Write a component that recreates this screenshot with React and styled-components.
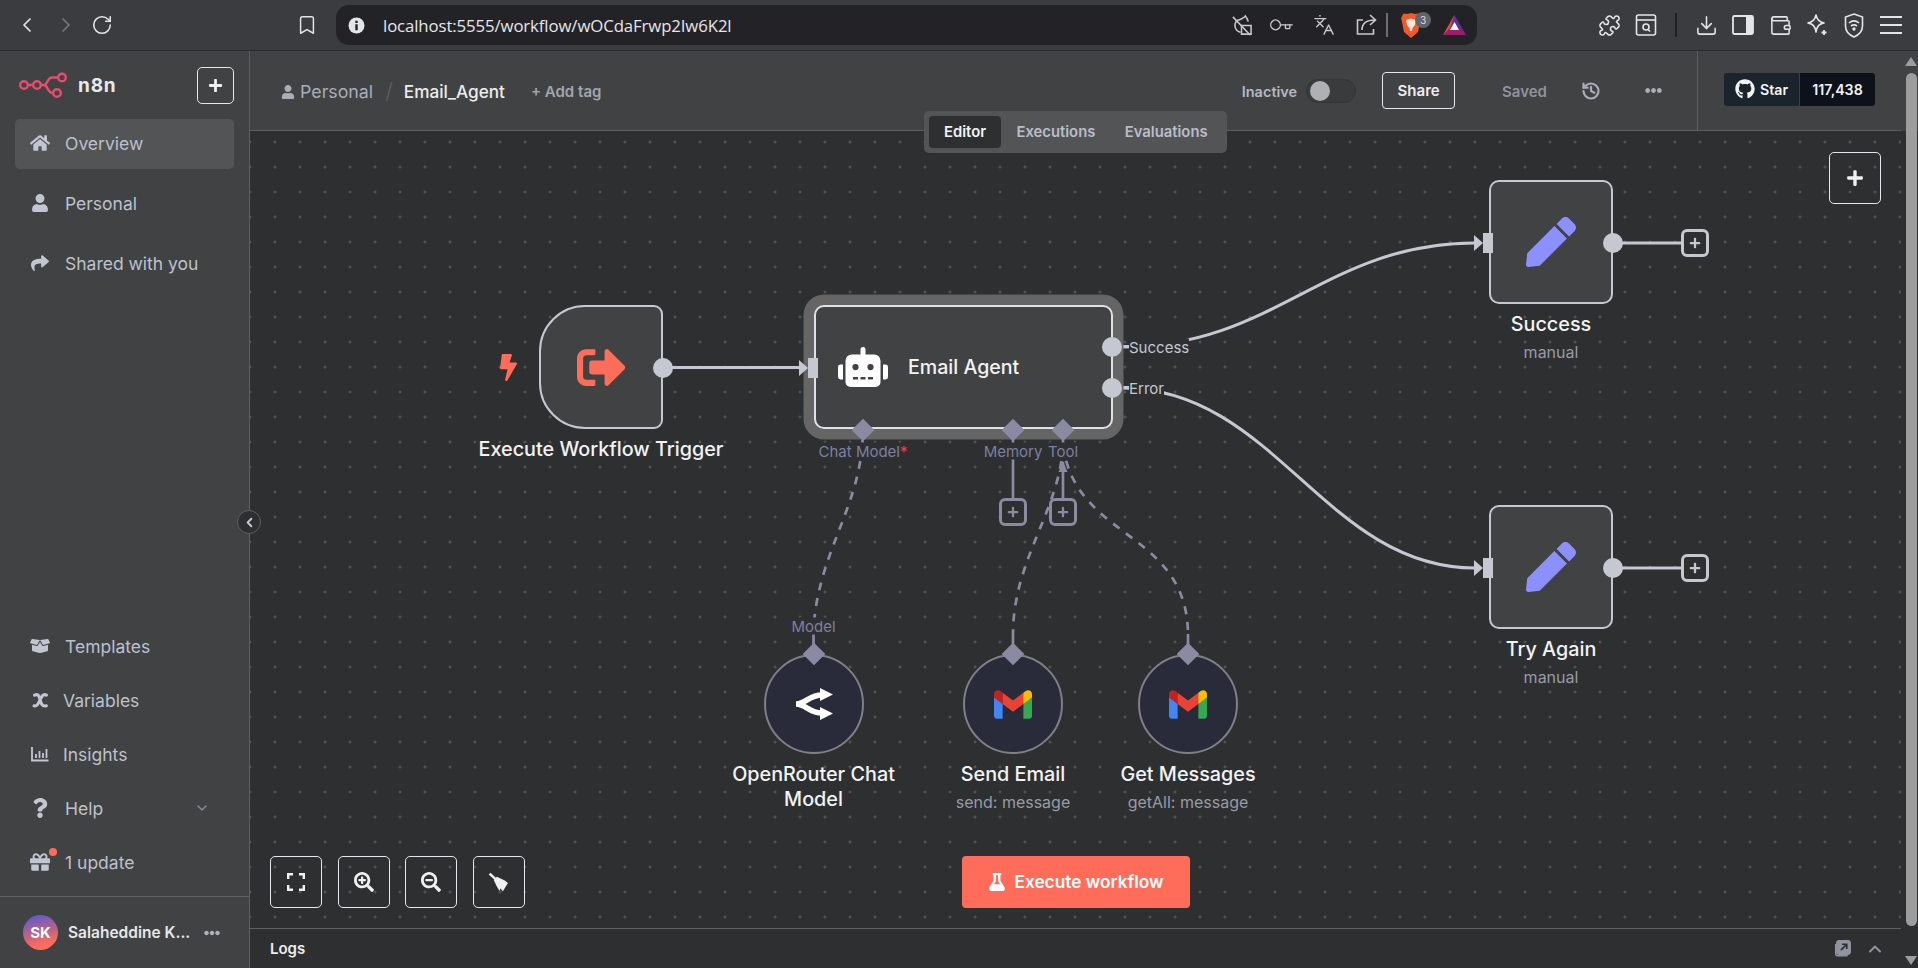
import React from "react"
import styled, { createGlobalStyle } from "styled-components"
import { ChevronLeft, ChevronRight, ChevronDown, ChevronUp, RotateCw, Bookmark, Key, Languages, Puzzle, Download, Wallet, History } from "lucide-react"
import {
  FaHome, FaUser, FaShare, FaBoxOpen, FaQuestion, FaGift, FaEllipsisH, FaGithub, FaBolt,
  FaSignOutAlt, FaRobot, FaPen, FaSearchPlus, FaSearchMinus, FaFlask, FaPlus,
} from "react-icons/fa"

const GlobalStyle = createGlobalStyle`
  html, body { margin: 0; padding: 0; height: 100%; overflow: hidden; background: #2e2f30; }
  body { font-family: Inter, "Noto Sans", sans-serif; color: #c5c8d1; }
  * { box-sizing: border-box; }
`

const Page = styled.div`
  width: 1918px;
  height: 968px;
  display: flex;
  flex-direction: column;
`

/* browser chrome */
const BrowserBar = styled.div`
  height: 51px;
  flex: none;
  display: flex;
  align-items: center;
  gap: 13px;
  padding-left: 15px;
  background: #3b3c40;
  border-bottom: 1px solid #2a2b2d;
`
const Slot = styled.div`
  position: relative;
  width: 24px;
  height: 24px;
  flex: none;
  display: flex;
  align-items: center;
  justify-content: center;
  color: ${p => p.$color || "#e4e5e8"};
  margin-left: ${p => p.$ml || 0}px;
`
const Address = styled.div`
  width: 1141px;
  height: 40px;
  flex: none;
  margin-left: 4px;
  display: flex;
  align-items: center;
  padding: 0 11px 0 8px;
  border-radius: 13px;
  background: #232327;
`
const Url = styled.div`
  flex: 1;
  margin-left: 15px;
  font-family: "Open Sans", sans-serif;
  font-size: 16.75px;
  letter-spacing: -0.1px;
  color: #e6e7ea;
`
const BarSep = styled.div`
  width: 2px;
  height: 24px;
  flex: none;
  margin: ${p => p.$m || "0"};
  background: ${p => p.$color || "#1f2023"};
`
const Badge = styled.div`
  position: absolute;
  top: -1px;
  right: -8px;
  width: 16px;
  height: 16px;
  border-radius: 50%;
  background: #62636d;
  color: #d9dae0;
  font-size: 10px;
  display: flex;
  align-items: center;
  justify-content: center;
`

const Body = styled.div`
  flex: 1;
  display: flex;
  min-height: 0;
`

/* left menu */
const Sidebar = styled.aside`
  position: relative;
  width: 250px;
  flex: none;
  display: flex;
  flex-direction: column;
  background: #414244;
  border-right: 1px solid #5e5f61;
`
const Brand = styled.div`
  height: 68px;
  flex: none;
  display: flex;
  align-items: center;
  padding: 0 15px 0 18px;
`
const BrandName = styled.span`
  margin-left: 10px;
  flex: 1;
  font-size: 19px;
  font-weight: 700;
  letter-spacing: 0.8px;
  color: #e8e9ec;
`
const SquareButton = styled.button`
  width: ${p => p.$size || 52}px;
  height: ${p => p.$size || 52}px;
  flex: none;
  padding: 0;
  display: flex;
  align-items: center;
  justify-content: center;
  background: transparent;
  border: 1px solid #e6e7ea;
  border-radius: 5px;
  color: #f0f0f2;
`
const TopNav = styled.nav`
  display: flex;
  flex-direction: column;
  gap: 10px;
  padding: 0 15px;
`
const BottomNav = styled.nav`
  margin-top: auto;
  display: flex;
  flex-direction: column;
  gap: 10px;
  padding: 0 15px 11px;
`
const NavItem = styled.div`
  height: ${p => p.$h || 50}px;
  display: flex;
  align-items: center;
  border-radius: 5px;
  padding: 0 0 2px 14px;
  font-size: 17.5px;
  color: #bcc1cc;
  background: ${p => (p.$active ? "#535456" : "transparent")};
`
const NavIcon = styled.span`
  position: relative;
  width: 22px;
  flex: none;
  display: flex;
  align-items: center;
  justify-content: center;
  margin-right: ${p => p.$mr ?? 14}px;
  color: #c1c6d0;
`
const NavChevron = styled.span`
  margin-left: auto;
  margin-right: 24px;
  display: flex;
  color: #8d8f95;
`
const RedDot = styled.span`
  position: absolute;
  top: -4px;
  right: -6px;
  width: 8px;
  height: 8px;
  border-radius: 50%;
  background: #ff6d5a;
`
const UserRow = styled.div`
  height: 72px;
  flex: none;
  display: flex;
  align-items: center;
  padding-left: 23px;
  border-top: 1px solid #5e5f61;
`
const Avatar = styled.div`
  width: 35px;
  height: 35px;
  border-radius: 50%;
  flex: none;
  display: flex;
  align-items: center;
  justify-content: center;
  font-size: 15px;
  font-weight: 700;
  color: #fff;
  background: linear-gradient(165deg, #5a59d6 5%, #b96283 48%, #ff6d5a 80%);
`
const UserName = styled.div`
  width: 122px;
  margin-left: 10px;
  white-space: nowrap;
  font-size: 15.5px;
  font-weight: 600;
  color: #e6e7ea;
`
const UserDots = styled.span`
  margin-left: 14px;
  display: flex;
  color: #aeb2bb;
`
const Collapse = styled.div`
  position: absolute;
  top: 459px;
  right: -12px;
  z-index: 5;
  width: 24px;
  height: 24px;
  border-radius: 50%;
  display: flex;
  align-items: center;
  justify-content: center;
  background: #2e2f30;
  border: 1px solid #5e5f61;
  color: #c5c8d1;
`

/* workflow area */
const Main = styled.main`
  position: relative;
  flex: 1;
  min-width: 0;
  display: flex;
  flex-direction: column;
`
const TopBar = styled.header`
  height: 80px;
  flex: none;
  display: flex;
  align-items: center;
  padding-left: 31px;
  background: #414244;
  border-bottom: 1px solid #5e5f61;
`
const Crumb = styled.span`
  display: flex;
  align-items: center;
  gap: 5px;
  margin-top: 2px;
  font-size: 17.8px;
  color: #a9adb7;
`
const Slash = styled.span`
  margin: 0 11px 0 12px;
  font-size: 22px;
  font-weight: 300;
  color: #5e5f61;
`
const WorkflowName = styled.span`
  margin-top: 2px;
  font-size: 17.2px;
  font-weight: 500;
  color: #eceded;
`
const AddTag = styled.span`
  margin-left: 26px;
  margin-top: 1px;
  font-size: 15px;
  font-weight: 600;
  color: #a2a6b0;
`
const Actions = styled.div`
  margin-left: auto;
  display: flex;
  align-items: center;
  padding-right: 35px;
`
const ActionText = styled.span`
  margin-top: 2px;
  font-size: ${p => p.$size || 15}px;
  font-weight: 600;
  color: ${p => p.$color};
  margin-left: ${p => p.$ml}px;
`
const Toggle = styled.div`
  width: 50px;
  height: 24px;
  margin-left: 9px;
  padding: 2px 3px;
  border-radius: 12px;
  background: #3a3b3d;
  border: 1px solid #333436;
  display: flex;
  align-items: center;
`
const Knob = styled.span`
  width: 20px;
  height: 20px;
  border-radius: 50%;
  background: #aeb0b3;
`
const ShareButton = styled.div`
  width: 73px;
  height: 37px;
  margin-left: 26px;
  display: flex;
  align-items: center;
  justify-content: center;
  border: 1px solid #e6e7ea;
  border-radius: 4px;
  font-size: 15px;
  font-weight: 600;
  color: #eceded;
`
const ActionIcon = styled.span`
  display: flex;
  margin-left: ${p => p.$ml}px;
  color: #a9adb7;
`
const GithubCell = styled.div`
  width: 204px;
  height: 100%;
  flex: none;
  padding-left: 26px;
  display: flex;
  align-items: center;
  border-left: 1px solid #5e5f61;
`
const StarGroup = styled.div`
  height: 33px;
  display: flex;
  margin-bottom: 3px;
  border-radius: 3px;
  overflow: hidden;
  font-size: 14.2px;
  font-weight: 600;
  color: #f2f3f5;
`
const StarLabel = styled.div`
  width: 76px;
  display: flex;
  align-items: center;
  justify-content: center;
  gap: 5px;
  background: #1b232d;
  border-right: 1px solid #3a4048;
`
const StarCount = styled.div`
  width: 75px;
  display: flex;
  align-items: center;
  justify-content: center;
  background: #0c111a;
`
const Tabs = styled.div`
  position: absolute;
  top: 60px;
  left: 674px;
  z-index: 6;
  width: 303px;
  height: 42px;
  padding: 5px;
  display: flex;
  align-items: center;
  border-radius: 5px;
  background: #535456;
`
const Tab = styled.div`
  height: 32px;
  display: flex;
  align-items: center;
  justify-content: center;
  padding: 0 ${p => p.$pad}px 1px;
  border-radius: 4px;
  font-size: 14.8px;
  font-weight: 600;
  color: ${p => (p.$active ? "#f2f3f5" : "#b9bdc8")};
  background: ${p => (p.$active ? "#2e2f30" : "transparent")};
`
const Canvas = styled.div`
  position: relative;
  flex: 1;
  background-color: #2e2f30;
  background-image: radial-gradient(circle at center, #5c5d60 1px, transparent 1.2px);
  background-size: 25px 25px;
  background-position: 12.5px -1.5px;
`
const EdgeLayer = styled.svg`
  position: absolute;
  left: 0;
  top: 0;
  width: 1651px;
  height: 798px;
`
const NodeWrap = styled.div`
  position: absolute;
  left: ${p => p.$x}px;
  top: ${p => p.$y}px;
  width: ${p => p.$w}px;
  display: flex;
  flex-direction: column;
  align-items: center;
`
const NodeBox = styled.div`
  width: 100%;
  height: ${p => p.$h || 124}px;
  display: flex;
  align-items: center;
  justify-content: center;
  background: #414244;
  border: 2.5px solid #c5c8d1;
  border-radius: ${p => p.$radius || "10px"};
`
const AgentBox = styled(NodeBox)`
  justify-content: flex-start;
  padding-left: 22px;
  gap: 20px;
  border-color: #dfe1e6;
  box-shadow: 0 0 0 10.5px #656565;
`
const AgentName = styled.span`
  font-size: 19.6px;
  font-weight: 500;
  color: #f2f3f5;
`
const RoundNode = styled(NodeBox)`
  height: 100px;
  border-radius: 50%;
  background: #2a2b3a;
  border: 2px solid #807f86;
`
const NodeName = styled.div`
  margin-top: 8px;
  white-space: nowrap;
  text-align: center;
  font-size: 19.8px;
  line-height: 25px;
  font-weight: 500;
  color: #f2f3f5;
`
const NodeSub = styled.div`
  margin-top: 4px;
  white-space: nowrap;
  font-size: 16px;
  line-height: 22px;
  color: #989ba6;
`
const Port = styled.span`
  position: absolute;
  left: ${p => p.$x}px;
  top: ${p => p.$y}px;
  width: 20px;
  height: 20px;
  transform: translate(-50%, -50%);
  border-radius: 50%;
  background: #c5c8d1;
`
const InPort = styled.span`
  position: absolute;
  left: ${p => p.$x}px;
  top: ${p => p.$y}px;
  width: 10px;
  height: 20px;
  transform: translate(-50%, -50%);
  background: #c5c8d1;
  &::before {
    content: "";
    position: absolute;
    left: -9px;
    top: 2px;
    border-left: 9px solid #c5c8d1;
    border-top: 8px solid transparent;
    border-bottom: 8px solid transparent;
  }
`
const Diamond = styled.span`
  position: absolute;
  left: ${p => p.$x}px;
  top: ${p => p.$y}px;
  width: 16px;
  height: 16px;
  transform: translate(-50%, -50%) rotate(45deg);
  background: #8a8ba2;
`
const PlusBox = styled.div`
  position: absolute;
  left: ${p => p.$x}px;
  top: ${p => p.$y}px;
  width: 28px;
  height: 28px;
  transform: translate(-50%, -50%);
  display: flex;
  align-items: center;
  justify-content: center;
  background: #2e2f30;
  border: 3px solid ${p => p.$color};
  border-radius: 6px;
  color: ${p => p.$color};
`
const PortLabel = styled.span`
  position: absolute;
  left: ${p => p.$x}px;
  top: ${p => p.$y}px;
  transform: ${p => (p.$center ? "translate(-50%, -50%)" : "translateY(-50%)")};
  white-space: nowrap;
  font-size: 15px;
  line-height: 17px;
  color: ${p => p.$color || "#7d80a0"};
  background: #2e2f30;
`
const Required = styled.span`
  color: #f5405d;
`
const Controls = styled.div`
  position: absolute;
  left: 20px;
  bottom: 20px;
  display: flex;
  gap: 15.5px;
`
const AddButton = styled(SquareButton)`
  position: absolute;
  top: 21px;
  right: 20px;
`
const ExecuteButton = styled.div`
  position: absolute;
  left: 712px;
  bottom: 20px;
  width: 228px;
  height: 52px;
  display: flex;
  align-items: center;
  justify-content: center;
  gap: 8px;
  padding-bottom: 1px;
  border-radius: 4px;
  background: #ff6d5a;
  color: #fff;
  font-size: 17.3px;
  font-weight: 600;
`
const LogsBar = styled.div`
  height: 40px;
  flex: none;
  display: flex;
  align-items: center;
  padding: 0 16px 0 20px;
  background: #2e2f30;
  border-top: 1px solid #5e5f61;
  font-size: 15px;
  font-weight: 600;
  color: #eceded;
`
const LogsIcons = styled.div`
  margin-left: auto;
  display: flex;
  align-items: center;
  gap: 14px;
  color: #9093a0;
`

/* scrollbar */
const Scrollbar = styled.div`
  width: 17px;
  flex: none;
  display: flex;
  flex-direction: column;
  align-items: center;
  padding: 6px 0 3px 3px;
  background: linear-gradient(#414244 80px, #2e2f30 80px);
`
const ScrollThumb = styled.div`
  width: 11px;
  height: 853px;
  margin-top: 7px;
  border-radius: 6px;
  background: #9d9d9d;
`
const ScrollArrow = styled.div`
  width: 0;
  height: 0;
  border-left: 6px solid transparent;
  border-right: 6px solid transparent;
  border-${p => (p.$down ? "top" : "bottom")}: 9px solid #9d9d9d;
  margin-top: ${p => (p.$down ? "auto" : "0")};
`

const N8nLogo = () => (
  <svg width="50" height="26" viewBox="0 0 50 26" fill="none" stroke="#ea4b71" strokeWidth="2.4">
    <circle cx="6" cy="13" r="3.8" />
    <circle cx="19" cy="13" r="3.8" />
    <circle cx="44" cy="5.5" r="3.8" />
    <circle cx="39" cy="21" r="3.8" />
    <path d="M10 13h5M23 13h3c4 0 3-7.500 8-7.500h6M26 13c4 0 3 8 9 8" />
  </svg>
)

const VariableIcon = () => (
  <svg width="17" height="17" viewBox="0 0 16 16" fill="none" stroke="currentColor" strokeWidth="3" strokeLinecap="round">
    <path d="M2.500 3c3-1.500 4 0 5 4s2 7 6 6M13.500 3c-3-2-5 2-6 4.500S4.500 14 2 13" />
  </svg>
)

const InsightsIcon = () => (
  <svg width="18" height="16" viewBox="0 0 18 16" fill="none" stroke="currentColor" strokeWidth="1.8">
    <path d="M1 1v13.500h16.500" />
    <path d="M5 12V8M8.500 12V5M12 12V7M15.500 12V3" />
  </svg>
)

const FitIcon = () => (
  <svg width="18" height="18" viewBox="0 0 18 18" fill="none" stroke="#f0f0f2" strokeWidth="2.4">
    <path d="M1.200 6V1.200H6M12 1.200h4.800V6M16.800 12v4.800H12M6 16.800H1.200V12" />
  </svg>
)

const BroomIcon = () => (
  <svg width="21" height="21" viewBox="0 0 20 20">
    <path d="M1.500 1.500L7.500 7" fill="none" stroke="#f0f0f2" strokeWidth="2.400" />
    <path d="M5.500 7.500L8.500 4.500L16 8L19 10.500L14 18.500L12 15.500L11 18L8 13Z" fill="#f0f0f2" />
  </svg>
)

const GmailIcon = () => (
  <svg width="38" height="29" viewBox="0 0 256 193">
    <path fill="#4285F4" d="M58.182 192.05V93.14L27.507 65.077 0 49.504v125.091c0 9.658 7.825 17.455 17.455 17.455h40.727Z" />
    <path fill="#34A853" d="M197.818 192.05h40.727c9.659 0 17.455-7.826 17.455-17.455V49.505l-31.156 17.837-27.026 25.798v98.91Z" />
    <path fill="#EA4335" d="m58.182 93.14-4.174-38.647 4.174-36.989L128 69.868l69.818-52.364 4.669 34.992-4.669 40.644L128 145.504z" />
    <path fill="#FBBC04" d="M197.818 17.504V93.14L256 49.504V26.231c0-21.585-24.64-33.89-41.89-20.945l-16.292 12.218Z" />
    <path fill="#C5221F" d="m0 49.504 26.759 20.07L58.182 93.14V17.504L41.89 5.286C24.61-7.66 0 4.646 0 26.23v23.273Z" />
  </svg>
)

const OpenRouterIcon = () => (
  <svg width="38" height="32" viewBox="0 0 38 32">
    <path d="M1 16C11 16 14 7 27 7M1 16C11 16 14 25 27 25" fill="none" stroke="#fff" strokeWidth="5.500" />
    <path d="M25 0l13 6.500-13 6.500zM25 19l13 6.500-13 6.500z" fill="#fff" />
  </svg>
)

const MailGuardLeaf = () => (
  <svg width="23" height="23" viewBox="0 0 24 24" fill="none" stroke="currentColor" strokeWidth="1.600">
    <path d="M11 19A7 7 0 0 1 8 6.500C13 5 14 4.500 16 2c1.500 2 2.500 3.500 3 6" />
    <path d="M3 3l18 19" />
    <path d="M12 12h10v9H12z" />
  </svg>
)

const ShareArrow = () => (
  <svg width="24" height="24" viewBox="0 0 24 24" fill="none" stroke="currentColor" strokeWidth="1.600">
    <path d="M9 7H3.500v14h16v-5" />
    <path d="M8 17c0-6 4-10 13-10M16 2l5.500 5-5.500 5" />
  </svg>
)

const BraveIcon = () => (
  <svg width="20" height="25" viewBox="0 0 20 25">
    <path d="M10 0l4 1 3.500-.5L20 5l-1 4-2 10-7 6-7-6L1 9 0 5 2.500.5 6 1z" fill="#f1582a" />
    <path d="M5 7l5-1.500L15 7l-1 5-2.500 3-.5 3H9l-.5-3L6 12z" fill="#fde3d6" />
  </svg>
)

const BatIcon = () => (
  <svg width="23" height="20" viewBox="0 0 23 20">
    <polygon points="11.500,0 23,20 0,20" fill="#662d91" />
    <polygon points="11.500,0 0,20 7,13" fill="#e5502a" />
    <polygon points="0,20 23,20 17,15 6,15" fill="#9e1f63" />
    <polygon points="11.500,7 16,15 7,15" fill="#fff" />
  </svg>
)

const TabSearch = () => (
  <svg width="22" height="24" viewBox="0 0 22 24" fill="none" stroke="currentColor" strokeWidth="1.600">
    <rect x="1.500" y="2" width="19" height="20" rx="2" />
    <path d="M1.500 7h19" />
    <circle cx="11" cy="14" r="3" />
    <path d="M13 16.500l2 2" />
  </svg>
)

const SidePanel = () => (
  <svg width="22" height="22" viewBox="0 0 22 22" fill="none" stroke="currentColor" strokeWidth="1.800">
    <rect x="1" y="2" width="20" height="18" rx="1.500" />
    <rect x="14" y="2" width="7" height="18" fill="currentColor" stroke="none" />
  </svg>
)

const Sparkle = () => (
  <svg width="24" height="24" viewBox="0 0 24 24" fill="none" stroke="currentColor" strokeWidth="1.600">
    <path d="M11 2c1 5 3 7 8 8-5 1-7 3-8 9-1-6-3-8-8-9 5-1 7-3 8-8Z" strokeLinejoin="round" />
    <path d="M19 17v5M16.500 19.500h5" strokeWidth="1.800" />
  </svg>
)

const VpnShield = () => (
  <svg width="20" height="25" viewBox="0 0 20 25" fill="none" stroke="currentColor" strokeWidth="1.600">
    <path d="M10 1l8.500 3v9c0 5-4 9-8.500 11-4.500-2-8.500-6-8.500-11V4z" />
    <path d="M5 10c3-2.500 7-2.500 10 0M7 13c2-1.500 4-1.500 6 0" />
    <circle cx="10" cy="16" r="0.900" fill="currentColor" />
  </svg>
)

const MenuLines = () => (
  <svg width="22" height="20" viewBox="0 0 22 20" stroke="currentColor" strokeWidth="1.800">
    <path d="M0 2h22M0 10h22M0 18h22" />
  </svg>
)

const PopOut = () => (
  <svg width="18" height="18" viewBox="0 0 16 16" fill="none" stroke="currentColor" strokeWidth="1.500">
    <rect x="3.500" y="0.800" width="11.700" height="11.700" rx="2" fill="currentColor" />
    <path d="M2.500 3.500v9a1.500 1.500 0 0 0 1.500 1.500h9" />
    <path d="M7 9l5-5M8 3.800h4.200V8" stroke="#2e2f30" />
  </svg>
)

const Edges = () => (
  <EdgeLayer viewBox="250 131 1651 798">
    <g fill="none" stroke="#c5c8d1" strokeWidth="3">
      <path d="M670 367.500H800" />
      <path d="M1122 347C1275 347 1325 243 1475 243" />
      <path d="M1122 388C1275 388 1325 568 1475 568" />
      <path d="M1620 243H1682" />
      <path d="M1620 568H1682" />
    </g>
    <g fill="none" stroke="#8a8ba2" strokeWidth="2.700">
      <path d="M1013 430V500" />
      <path d="M1063 462V500" />
      <path d="M862.500 440V447" />
      <path d="M1063 440V447" />
      <path d="M813.500 634V655M1013 634V655M1188 634V655" />
      <g strokeDasharray="8 8">
        <path d="M862 445C858 510 815 560 813.500 634" />
        <path d="M1063 445C1060 510 1013 560 1013 634" />
        <path d="M1063 445C1075 540 1187 530 1188 634" />
      </g>
    </g>
    <path d="M1063 461l-4.500 11h9z" fill="#8a8ba2" />
    <path d="M1122 346h8M1122 387h8" stroke="#c5c8d1" strokeWidth="2" />
  </EdgeLayer>
)

export default function App() {
  return (
    <Page>
      <GlobalStyle />
      <BrowserBar>
        <Slot><ChevronLeft size={30} strokeWidth={1.7} /></Slot>
        <Slot $ml={2} $color="#77787c"><ChevronRight size={30} strokeWidth={1.7} /></Slot>
        <Slot $ml={-1}><RotateCw size={22} strokeWidth={1.7} /></Slot>
        <Slot $ml={168}><Bookmark size={22} strokeWidth={1.6} /></Slot>
        <Address>
          <Slot>
            <svg width="17" height="17" viewBox="0 0 17 17">
              <circle cx="8.500" cy="8.500" r="8" fill="#e4e5e8" />
              <path d="M7.300 7.200h2.400v6H7.300zM7.300 3.700h2.400v2.200H7.300z" fill="#232327" />
            </svg>
          </Slot>
          <Url>localhost:5555/workflow/wOCdaFrwp2Iw6K2l</Url>
          <Slot $ml={-2} $color="#c8c9cc"><MailGuardLeaf /></Slot>
          <Slot $ml={15} $color="#c8c9cc"><Key size={21} strokeWidth={1.6} style={{ transform: "rotate(45deg)" }} /></Slot>
          <Slot $ml={20} $color="#c8c9cc"><Languages size={22} strokeWidth={1.5} /></Slot>
          <Slot $ml={18} $color="#c8c9cc"><ShareArrow /></Slot>
          <BarSep $m="0 0 0 8px" $color="#6d6e73" />
          <Slot $ml={11}><BraveIcon /><Badge>3</Badge></Slot>
          <Slot $ml={19}><BatIcon /></Slot>
        </Address>
        <Slot $ml={107}><Puzzle size={23} strokeWidth={1.6} /></Slot>
        <Slot><TabSearch /></Slot>
        <BarSep $m="0 4px" />
        <Slot><Download size={23} strokeWidth={1.6} /></Slot>
        <Slot><SidePanel /></Slot>
        <Slot><Wallet size={23} strokeWidth={1.6} /></Slot>
        <Slot><Sparkle /></Slot>
        <Slot><VpnShield /></Slot>
        <Slot><MenuLines /></Slot>
      </BrowserBar>
      <Body>
        <Sidebar>
          <Brand>
            <N8nLogo />
            <BrandName>n8n</BrandName>
            <SquareButton $size={37}><FaPlus size={15} /></SquareButton>
          </Brand>
          <TopNav>
            <NavItem $active><NavIcon><FaHome size={20} /></NavIcon>Overview</NavItem>
            <NavItem><NavIcon><FaUser size={18} /></NavIcon>Personal</NavItem>
            <NavItem><NavIcon><FaShare size={18} /></NavIcon>Shared with you</NavItem>
          </TopNav>
          <BottomNav>
            <NavItem $h={44}><NavIcon><FaBoxOpen size={20} /></NavIcon>Templates</NavItem>
            <NavItem $h={44}><NavIcon $mr={12}><VariableIcon /></NavIcon>Variables</NavItem>
            <NavItem $h={44}><NavIcon $mr={12}><InsightsIcon /></NavIcon>Insights</NavItem>
            <NavItem $h={44}>
              <NavIcon><FaQuestion size={20} /></NavIcon>Help
              <NavChevron><ChevronDown size={16} /></NavChevron>
            </NavItem>
            <NavItem $h={44}><NavIcon><FaGift size={20} /><RedDot /></NavIcon>1 update</NavItem>
          </BottomNav>
          <UserRow>
            <Avatar>SK</Avatar>
            <UserName>Salaheddine K...</UserName>
            <UserDots><FaEllipsisH size={16} /></UserDots>
          </UserRow>
          <Collapse><ChevronLeft size={15} strokeWidth={3} /></Collapse>
        </Sidebar>
        <Main>
          <TopBar>
            <Crumb><FaUser size={14} />Personal</Crumb>
            <Slash>/</Slash>
            <WorkflowName>Email_Agent</WorkflowName>
            <AddTag>+ Add tag</AddTag>
            <Actions>
              <ActionText $color="#b4b8c2" $ml={0} $size={14.5}>Inactive</ActionText>
              <Toggle><Knob /></Toggle>
              <ShareButton>Share</ShareButton>
              <ActionText $color="#8f929d" $ml={47}>Saved</ActionText>
              <ActionIcon $ml={34}><History size={20} strokeWidth={2.6} /></ActionIcon>
              <ActionIcon $ml={44}><FaEllipsisH size={17} /></ActionIcon>
            </Actions>
            <GithubCell>
              <StarGroup>
                <StarLabel><FaGithub size={20} />Star</StarLabel>
                <StarCount>117,438</StarCount>
              </StarGroup>
            </GithubCell>
          </TopBar>
          <Tabs>
            <Tab $active $pad={15}>Editor</Tab>
            <Tab $pad={15.5}>Executions</Tab>
            <Tab $pad={14}>Evaluations</Tab>
          </Tabs>
          <Canvas>
            <Edges />

            <NodeWrap $x={289} $y={174} $w={124}>
              <NodeBox $radius="46px 9px 9px 46px"><FaSignOutAlt size={49} color="#ff6d5a" /></NodeBox>
              <NodeName>Execute Workflow Trigger</NodeName>
            </NodeWrap>
            <NodeWrap $x={246.5} $y={222.5} $w={24}>
              <FaBolt size={27} color="#ff6d5a" />
            </NodeWrap>

            <NodeWrap $x={564} $y={174} $w={299}>
              <AgentBox>
                <FaRobot size={50} color="#fff" />
                <AgentName>Email Agent</AgentName>
              </AgentBox>
            </NodeWrap>

            <NodeWrap $x={1239} $y={49} $w={124}>
              <NodeBox><FaPen size={50} color="#8c90ff" /></NodeBox>
              <NodeName>Success</NodeName>
              <NodeSub>manual</NodeSub>
            </NodeWrap>
            <NodeWrap $x={1239} $y={374} $w={124}>
              <NodeBox><FaPen size={50} color="#8c90ff" /></NodeBox>
              <NodeName>Try Again</NodeName>
              <NodeSub>manual</NodeSub>
            </NodeWrap>

            <NodeWrap $x={513.5} $y={523} $w={100}>
              <RoundNode><OpenRouterIcon /></RoundNode>
              <NodeName>OpenRouter Chat<br />Model</NodeName>
            </NodeWrap>
            <NodeWrap $x={713} $y={523} $w={100}>
              <RoundNode><GmailIcon /></RoundNode>
              <NodeName>Send Email</NodeName>
              <NodeSub>send: message</NodeSub>
            </NodeWrap>
            <NodeWrap $x={888} $y={523} $w={100}>
              <RoundNode><GmailIcon /></RoundNode>
              <NodeName>Get Messages</NodeName>
              <NodeSub>getAll: message</NodeSub>
            </NodeWrap>

            <Port $x={413} $y={237} />
            <Port $x={862} $y={216} />
            <Port $x={862} $y={257} />
            <Port $x={1363} $y={112} />
            <Port $x={1363} $y={437} />
            <InPort $x={563} $y={237} />
            <InPort $x={1238} $y={112} />
            <InPort $x={1238} $y={437} />

            <Diamond $x={612.7} $y={299} />
            <Diamond $x={762.7} $y={299} />
            <Diamond $x={813.3} $y={299} />
            <Diamond $x={563.5} $y={523} />
            <Diamond $x={763} $y={523} />
            <Diamond $x={938} $y={523} />

            <PlusBox $x={1445} $y={112} $color="#c5c8d1"><FaPlus size={12} /></PlusBox>
            <PlusBox $x={1445} $y={437} $color="#c5c8d1"><FaPlus size={12} /></PlusBox>
            <PlusBox $x={763.3} $y={381} $color="#8a8ba2"><FaPlus size={12} /></PlusBox>
            <PlusBox $x={813.3} $y={381} $color="#8a8ba2"><FaPlus size={12} /></PlusBox>

            <PortLabel $center $x={613} $y={320}>Chat Model<Required>*</Required></PortLabel>
            <PortLabel $center $x={763} $y={320}>Memory</PortLabel>
            <PortLabel $center $x={813} $y={320}>Tool</PortLabel>
            <PortLabel $center $x={563.5} $y={495}>Model</PortLabel>
            <PortLabel $x={879} $y={216} $color="#c5c8d1">Success</PortLabel>
            <PortLabel $x={879} $y={257} $color="#c5c8d1">Error</PortLabel>

            <AddButton><FaPlus size={18} /></AddButton>
            <Controls>
              <SquareButton><FitIcon /></SquareButton>
              <SquareButton><FaSearchPlus size={20} /></SquareButton>
              <SquareButton><FaSearchMinus size={20} /></SquareButton>
              <SquareButton><BroomIcon /></SquareButton>
            </Controls>
            <ExecuteButton><FaFlask size={18} />Execute workflow</ExecuteButton>
          </Canvas>
          <LogsBar>
            Logs
            <LogsIcons>
              <PopOut />
              <ChevronUp size={20} strokeWidth={2.4} />
            </LogsIcons>
          </LogsBar>
        </Main>
        <Scrollbar>
          <ScrollArrow />
          <ScrollThumb />
          <ScrollArrow $down />
        </Scrollbar>
      </Body>
    </Page>
  )
}
